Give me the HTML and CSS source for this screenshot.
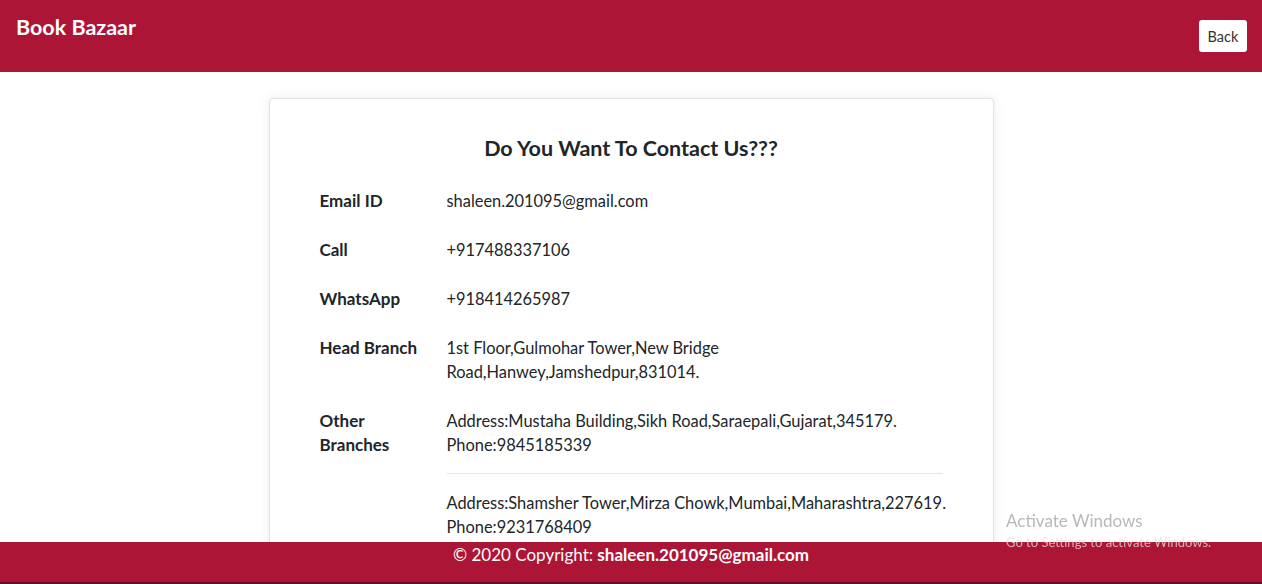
FILE: index.html
```html
<!DOCTYPE html>
<html lang="en">
<head>
<meta charset="utf-8">
<title>Book Bazaar - Contact</title>
<link rel="stylesheet" href="styles.css">
</head>
<body>
<header class="topbar">
  <div class="brand">Book Bazaar</div>
  <button class="back-btn">Back</button>
</header>
<main class="page">
  <section class="card">
    <h2 class="card-title">Do You Want To Contact Us???</h2>
    <div class="info">
      <div class="label">Email ID</div>
      <div class="value">shaleen.201095@gmail.com</div>
      <div class="label">Call</div>
      <div class="value">+917488337106</div>
      <div class="label">WhatsApp</div>
      <div class="value">+918414265987</div>
      <div class="label">Head Branch</div>
      <div class="value">1st Floor,Gulmohar Tower,New Bridge<br>Road,Hanwey,Jamshedpur,831014.</div>
      <div class="label">Other<br>Branches</div>
      <div class="value">
        <div class="branch">Address:Mustaha Building,Sikh Road,Saraepali,Gujarat,345179.<br>Phone:9845185339</div>
        <hr class="sep">
        <div class="branch">Address:Shamsher Tower,Mirza Chowk,Mumbai,Maharashtra,227619.<br>Phone:9231768409</div>
      </div>
    </div>
  </section>
</main>
<footer class="footer">© 2020 Copyright: <strong>shaleen.201095@gmail.com</strong></footer>
<div class="watermark">
  <div class="wm-title">Activate Windows</div>
  <div class="wm-sub">Go to Settings to activate Windows.</div>
</div>
</body>
</html>
```

FILE: styles.css
```css
* { box-sizing: border-box; }
html, body { margin: 0; padding: 0; }
body {
  font-family: Lato, "Open Sans", sans-serif;
  font-size: 16.4px;
  line-height: 24px;
  color: #212529;
  background: #fff;
  height: 584px;
  overflow: hidden;
}
.topbar {
  height: 72px;
  background: #ad1537;
  display: flex;
  justify-content: space-between;
  align-items: flex-start;
  padding: 15px 15px 0 16px;
}
.brand {
  color: #fff;
  font-weight: 700;
  font-size: 21.5px;
  line-height: 24px;
}
.back-btn {
  margin-top: 5px;
  width: 48px;
  height: 32px;
  background: #fff;
  border: none;
  border-radius: 3px;
  font-family: Lato, "Open Sans", sans-serif;
  font-size: 14.5px;
  color: #333;
  padding: 0;
}
.page { padding-top: 26px; }
.card {
  width: 725px;
  margin: 0 auto;
  border: 1px solid #e2e2e2;
  border-radius: 4px;
  box-shadow: 0 0 12px rgba(0,0,0,0.08);
  padding: 37px 50px 40px;
  background: #fff;
}
.card-title {
  margin: 0 0 29px;
  text-align: center;
  font-size: 21.5px;
  line-height: 24px;
  font-weight: 700;
}
.info {
  display: grid;
  grid-template-columns: 127px minmax(0, 1fr);
  row-gap: 25px;
}
.label { font-weight: 700; font-size: 17px; }
.branch { white-space: nowrap; }
.sep {
  border: none;
  border-top: 1px solid #e5e5e5;
  margin: 16px 0 17px;
}
.footer {
  position: fixed;
  left: 0;
  right: 0;
  bottom: 0;
  height: 42px;
  background: #ad1537;
  color: #fff;
  text-align: center;
  font-size: 17px;
  padding-top: 1px;
  border-bottom: 2px solid #5c1426;
}
.watermark {
  position: fixed;
  left: 1006px;
  top: 510px;
  color: rgba(160,160,160,0.75);
  pointer-events: none;
}
.wm-title { font-size: 17px; line-height: 22px; }
.wm-sub { font-size: 13px; line-height: 20px; color: rgba(225,225,225,0.75); }
```
